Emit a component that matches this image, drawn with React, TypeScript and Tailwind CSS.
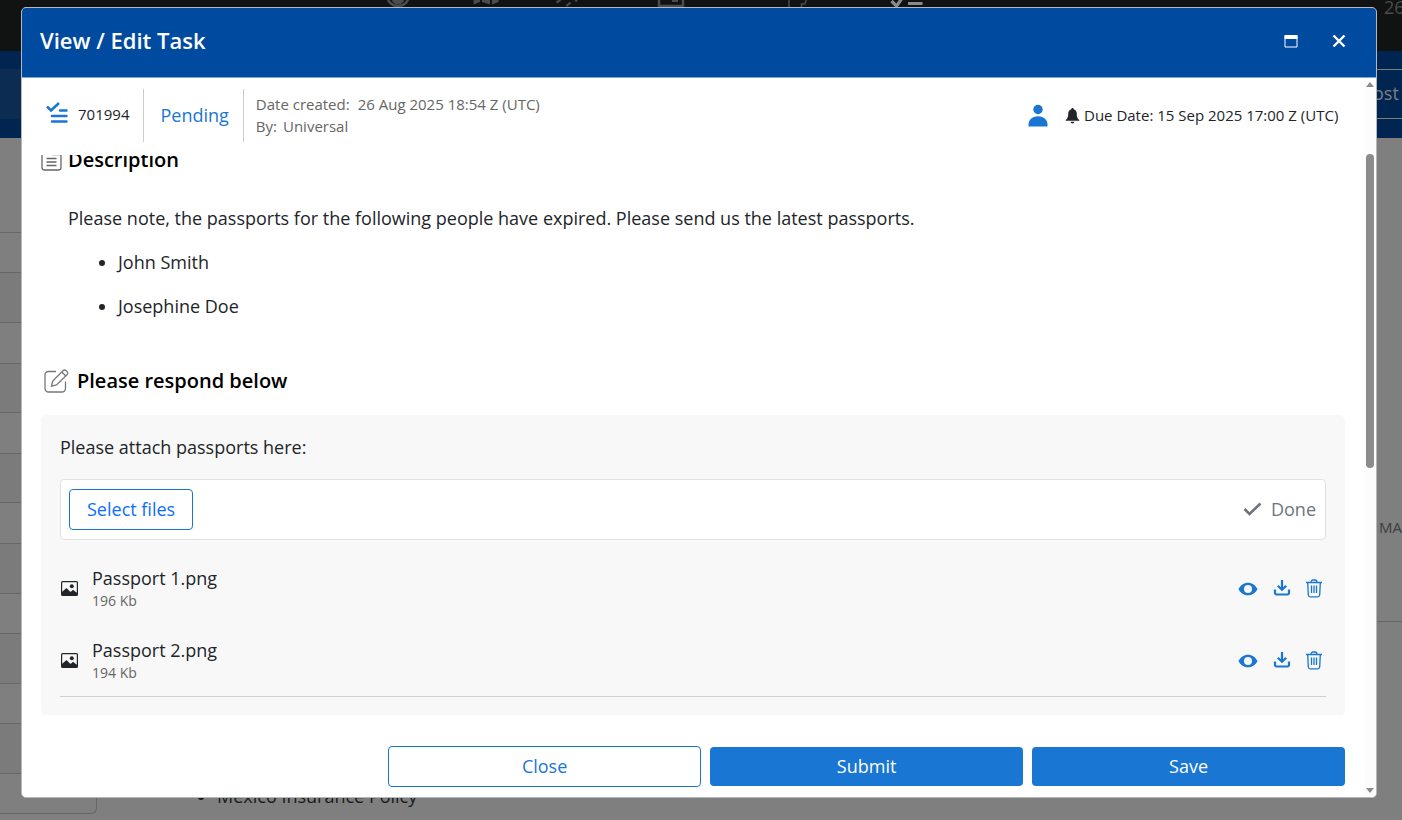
import type { ReactNode } from "react";

const FILES = [
  { name: "Passport 1.png", size: "196 Kb" },
  { name: "Passport 2.png", size: "194 Kb" },
];

const PEOPLE = ["John Smith", "Josephine Doe"];

const ROW_HEIGHTS = [40, 50, 41, 49, 41, 49, 41, 50, 40, 50, 40, 50];

export default function App() {
  return (
    <div className="relative h-screen overflow-hidden bg-[#7f7f7f] font-['Open_Sans','Noto_Sans',sans-serif] text-[#212529]">
      <PageBehind />
      <TaskDialog />
    </div>
  );
}

function PageBehind() {
  return (
    <div aria-hidden="true" className="flex h-full flex-col">
      <div className="flex h-[51px] shrink-0 items-start justify-between bg-[#101312]">
        <svg className="h-4 w-[960px] shrink-0" viewBox="0 0 960 16" fill="none" stroke="#4b4c4b">
          <circle cx="398" cy="-5" r="11" strokeWidth="2.500" />
          <circle cx="398" cy="-2" r="6.500" fill="#4b4c4b" stroke="none" />
          <path d="M473.500-4v8.500l6.500-2.500V-4zM482-4v6l8 2.500V-4zM492-4v8.500l6.500-2.500V-4z" fill="#4b4c4b" stroke="none" />
          <path d="M556.500 2.500l4-2.500M566.500 6l4-3.500M575.500 1.500l1.500-2.500" strokeWidth="2.200" />
          <path d="M659-4V6h24V-4" strokeWidth="2.500" />
          <path d="M672-4h6v6h-6z" fill="#4b4c4b" stroke="none" />
          <path d="M789-4V8M801.500 8V4h3.500l1.500-5" strokeWidth="1.500" />
          <path d="M891.500 1l5 5 6.500-9M908 3.500h14.500" stroke="#8a8a8a" strokeWidth="3.200" />
        </svg>
        <span className="-mt-[7px] w-[18px] text-lg leading-7 text-[#4b4c4b]">26</span>
      </div>
      <div className="flex h-[87px] shrink-0 items-center justify-between bg-[#002550] pb-0.5">
        <div className="h-[50px] w-24 bg-[#0c2d51]" />
        <div className="h-[50px] w-[60px] border-y border-[#7f7f7f] pl-[31px] text-lg leading-[46px] text-[#7f7f7f]">
          ost
        </div>
      </div>
      <div className="flex min-h-0 flex-1 justify-between">
        <div className="flex w-[97px] flex-col">
          <div className="h-[95px] shrink-0 border-b border-[#666768]" />
          {ROW_HEIGHTS.map((height, i) => (
            <div
              key={i}
              className={i % 2 ? "shrink-0 border-b border-[#666768] bg-[#7b7b7b]" : "shrink-0 border-b border-[#666768]"}
              style={{ height }}
            />
          ))}
          <div className="h-10 shrink-0 rounded-br-md border-b border-r border-[#666768]" />
        </div>
        <ul className="mr-auto self-end pb-2.5 pl-[120px] text-lg leading-7 text-[#191b1d]">
          <li className="list-disc">Mexico Insurance Policy</li>
        </ul>
        <div className="w-[26px]">
          <div className="h-[484px] border-b border-[#666768] pl-[3px] pt-[377px] text-[15px] leading-6 text-[#3d3e3f]">
            MA
          </div>
        </div>
      </div>
    </div>
  );
}

function TaskDialog() {
  return (
    <div
      role="dialog"
      aria-labelledby="dialog-title"
      className="absolute bottom-[22px] left-[21px] right-[25px] top-[7px] flex flex-col overflow-hidden rounded-[5px] border border-[#b5b8bb] bg-white"
    >
      <header className="-mx-px -mt-px flex h-[71px] shrink-0 items-center justify-between rounded-t-[5px] border border-[#3370b5] border-b-[#7fa5d0] bg-[#004a9f] pb-1 pl-[18px] pr-[25px] text-white">
        <h1 id="dialog-title" className="pb-0.5 text-[22px] font-semibold leading-8">
          View / Edit Task
        </h1>
        <div className="flex gap-6">
          <IconButton label="Maximize">
            <svg className="size-6" viewBox="0 0 24 24" fill="none" stroke="currentColor">
              <path d="M6 7v11h12V7" />
              <path d="M5.500 8h13" strokeWidth="4" />
            </svg>
          </IconButton>
          <IconButton label="Close dialog">
            <svg className="size-6" viewBox="0 0 24 24" fill="none" stroke="currentColor" strokeWidth="2.400">
              <path d="M6.500 6.500l11 11M17.500 6.500l-11 11" />
            </svg>
          </IconButton>
        </div>
      </header>

      <div className="flex min-h-0 flex-1">
        <div className="flex min-w-0 flex-1 flex-col">
          <TaskSummary />
          <main className="min-h-0 flex-1 overflow-hidden px-[19px]">
            <Description />
            <Response />
          </main>
          <footer className="flex h-[82px] shrink-0 items-center justify-end gap-[9px] px-[19px] pt-5">
            <button type="button" className="h-[41px] w-[24%] rounded border border-[#1976d2] text-lg text-[#1976d2]">
              Close
            </button>
            <button type="button" className="h-[39px] w-[24%] rounded bg-[#1976d2] text-lg text-white">
              Submit
            </button>
            <button type="button" className="h-[39px] w-[24%] rounded bg-[#1976d2] text-lg text-white">
              Save
            </button>
          </footer>
        </div>
        <Scrollbar />
      </div>
    </div>
  );
}

function TaskSummary() {
  return (
    <div className="flex h-[77px] shrink-0 items-center justify-between px-[19px] pb-0.5">
      <div className="flex h-[53px] items-center">
        <svg className="ml-[5px] mr-2.5 -mt-1.5 size-[22px]" viewBox="0 0 22 22" fill="none" stroke="#1976d2" strokeWidth="2.500">
          <path d="M1 4.500l4 4L13 1" />
          <path d="M14 8.500h6.500M6 14h14.500M6 19.500h14.500" strokeLinecap="round" />
        </svg>
        <span className="pb-0.5 pr-3.5 text-[15px]">701994</span>
        <span className="flex h-full items-center border-x border-[#ccc] pb-0.5 pl-4 pr-3.5 text-lg text-[#1976d2]">
          Pending
        </span>
        <dl className="ml-3 pb-0.5 text-[15px] leading-[22px] text-[#666]">
          <div className="flex gap-2">
            <dt>Date created:</dt>
            <dd>26 Aug 2025 18:54 Z (UTC)</dd>
          </div>
          <div className="flex gap-1.5">
            <dt>By:</dt>
            <dd>Universal</dd>
          </div>
        </dl>
      </div>
      <div className="flex items-center text-[15px]">
        <svg className="mr-[17px] h-[23px] w-5" viewBox="0 0 20 23" fill="#1976d2">
          <circle cx="10" cy="5.500" r="4.700" />
          <path d="M.5 22.500v-2c0-4.500 3.500-8.200 9.500-8.200s9.500 3.700 9.500 8.200v2z" />
        </svg>
        <svg className="mr-1 h-4 w-[15px]" viewBox="0 0 15 16" fill="#212529">
          <path d="M7.500 0c.7 0 1.200.5 1.200 1.200 2.200.6 3.100 2.300 3.100 4.500 0 3.300.6 4.800 2.500 6.300v.8H.7V12c1.900-1.500 2.500-3 2.500-6.300 0-2.200.9-3.900 3.100-4.500C6.300.5 6.800 0 7.500 0zM5.700 13.700h3.600c0 1-.8 1.700-1.800 1.700s-1.800-.7-1.800-1.700z" />
        </svg>
        <span className="min-w-[261px] pb-px">Due Date: 15 Sep 2025 17:00 Z (UTC)</span>
      </div>
    </div>
  );
}

function Description() {
  return (
    <section className="-mt-[9px]">
      <h2 className="flex items-center gap-1.5 text-[20px] font-semibold leading-7 text-black">
        <svg className="size-[21px]" viewBox="0 0 21 21" fill="none" stroke="#666" strokeWidth="1.300">
          <path d="M14 1h3.500A2.500 2.500 0 0 1 20 3.500v14a2.500 2.500 0 0 1-2.500 2.500h-14A2.500 2.500 0 0 1 1 17.500v-14A2.500 2.500 0 0 1 3.500 1H8" />
          <path d="M11 4.500h8.500M5.500 8.500h10M5.500 12h10M5.500 15.500h10" />
        </svg>
        Description
      </h2>
      <div className="mt-[30px] pl-[27px] text-lg leading-7">
        <p>Please note, the passports for the following people have expired. Please send us the latest passports.</p>
        <ul className="mt-4 flex list-disc flex-col gap-4 pl-[50px]">
          {PEOPLE.map((person) => (
            <li key={person}>{person}</li>
          ))}
        </ul>
      </div>
    </section>
  );
}

function Response() {
  return (
    <section className="mt-[47px]">
      <h2 className="flex items-center gap-2 pl-[3px] text-[20px] font-semibold leading-7 text-black">
        <svg className="size-[25px]" viewBox="0 0 25 25" fill="none" stroke="#777" strokeWidth="1.300">
          <path d="M12 2.500H4.500A3.500 3.500 0 0 0 1 6v13.500A3.500 3.500 0 0 0 4.500 23H18a3.500 3.500 0 0 0 3.500-3.500V12.500" />
          <path d="M7.500 17.200l1.200-5.200L19 1.700a2.200 2.200 0 0 1 3.200 0l.8.800a2.200 2.200 0 0 1 0 3.200L12.500 16zM17.800 3l4 4" />
        </svg>
        Please respond below
      </h2>
      <div className="mt-5 rounded-md bg-[#f8f8f8] px-[19px] pb-[19px] pt-[18px] text-lg">
        <p className="leading-7">Please attach passports here:</p>
        <div className="mt-[18px] flex h-[61px] items-center justify-between rounded border border-[#dee2e6] bg-white pl-2 pr-[9px]">
          <button type="button" className="h-[41px] rounded border border-[#1976d2] px-[17px] pb-0.5 text-[#0d6efd]">
            Select files
          </button>
          <span className="flex items-center gap-[9px] pb-0.5 text-[#6c757d]">
            <svg className="size-5" viewBox="0 0 20 20" fill="none" stroke="currentColor" strokeWidth="2.600">
              <path d="M2.500 10l5 5L18.500 4.500" />
            </svg>
            Done
          </span>
        </div>
        <ul className="mt-3 border-b border-[#d0d0d0]">
          {FILES.map((file) => (
            <FileRow key={file.name} name={file.name} size={file.size} />
          ))}
        </ul>
      </div>
    </section>
  );
}

function FileRow({ name, size }: { name: string; size: string }) {
  return (
    <li className="flex h-[72px] items-center pt-0.5">
      <svg className="mr-3 h-4 w-5" viewBox="0 0 20 16" fill="#212529">
        <path
          fillRule="evenodd"
          d="M1 1.500A1.500 1.500 0 0 1 2.500 0h14A1.500 1.500 0 0 1 18 1.500v12a1.500 1.500 0 0 1-1.500 1.500h-14A1.500 1.500 0 0 1 1 13.500zM2.200 1.200v9.500L6.500 7l4 4 2.500-2.200 3.800 3V1.200z"
        />
        <circle cx="11.800" cy="5.200" r="2" />
      </svg>
      <div className="mr-auto pb-0.5">
        <p className="leading-6">{name}</p>
        <p className="pt-px text-sm leading-5 text-[#666]">{size}</p>
      </div>
      <div className="flex items-center gap-3 pr-0.5 text-[#1976d2]">
        <IconButton label={`View ${name}`}>
          <svg className="mr-0.5 size-5" viewBox="0 0 20 20" fill="currentColor">
            <path
              fillRule="evenodd"
              d="M.5 10C2.500 6 6 3.700 10 3.700S17.500 6 19.500 10c-2 4-5.500 6.300-9.500 6.300S2.500 14 .5 10zM10 6a4 4 0 1 0 0 8 4 4 0 0 0 0-8z"
            />
          </svg>
        </IconButton>
        <IconButton label={`Download ${name}`}>
          <svg className="size-5" viewBox="0 0 20 20" fill="none" stroke="currentColor" strokeWidth="2.200">
            <path d="M10 1v9.500M5.800 6.700L10 10.800l4.200-4.100M3 10.500v3.500a1.500 1.500 0 0 0 1.500 1.500h11a1.500 1.500 0 0 0 1.500-1.500v-3.500" />
          </svg>
        </IconButton>
        <IconButton label={`Delete ${name}`}>
          <svg className="size-5" viewBox="0 0 20 20" fill="none" stroke="currentColor" strokeWidth="1.300">
            <path d="M2 3.500h16M3.700 3.500l.6 12.500A2 2 0 0 0 6.300 17.800h7.400a2 2 0 0 0 2-1.800l.6-12.500M7 3.500C7 2 7.800 1 9 1h2c1.200 0 2 1 2 2.500M7.500 6.500v7.500M10 6.500v7.500M12.500 6.500v7.500" />
          </svg>
        </IconButton>
      </div>
    </li>
  );
}

function IconButton({ label, children }: { label: string; children: ReactNode }) {
  return (
    <button type="button" aria-label={label} className="block">
      {children}
    </button>
  );
}

function Scrollbar() {
  return (
    <div aria-hidden="true" className="flex w-3 shrink-0 flex-col items-center bg-[#fcfcfc] pb-1 pt-1">
      <svg className="h-[5px] w-2" viewBox="0 0 8 5" fill="#8b8b8b">
        <path d="M4 0l4 5H0z" />
      </svg>
      <div className="flex w-full flex-1 justify-center pb-1.5 pt-[67px]">
        <div className="h-1/2 w-2 rounded-full bg-[#8b8b8b]" />
      </div>
      <svg className="h-[5px] w-2" viewBox="0 0 8 5" fill="#8b8b8b">
        <path d="M0 0h8L4 5z" />
      </svg>
    </div>
  );
}
